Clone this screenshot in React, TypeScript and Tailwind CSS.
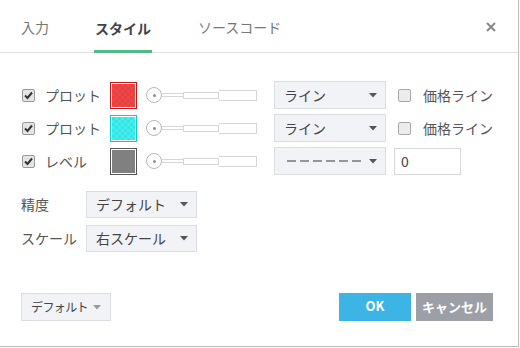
import React from "react";

const font = "font-['Noto_Sans_CJK_JP','Noto_Sans',sans-serif]";

function Check({ checked }: { checked: boolean }) {
  return (
    <div
      className={`w-[13px] h-[13px] rounded-[2px] border flex items-center justify-center ${
        checked ? "border-[#9a9a9a] bg-[#e4e4e4]" : "border-[#a8a8a8] bg-[#ececec]"
      }`}
    >
      {checked && (
        <svg width="9" height="9" viewBox="0 0 9 9">
          <path d="M1 4.5 L3.5 7 L8 1.5" stroke="#333" strokeWidth="2" fill="none" />
        </svg>
      )}
    </div>
  );
}

function Swatch({ color, border, checker }: { color: string; border: string; checker: boolean }) {
  return (
    <div className="w-[27px] h-[27px] border p-[1px] bg-white" style={{ borderColor: border }}>
      <svg width="23" height="23" viewBox="0 0 23 23" className="block">
        <defs>
          <pattern id={`p${color}`} width="6" height="6" patternUnits="userSpaceOnUse">
            <rect width="6" height="6" fill={color} />
            {checker && <rect width="3" height="3" fill="#000" opacity="0.06" />}
            {checker && <rect x="3" y="3" width="3" height="3" fill="#000" opacity="0.06" />}
          </pattern>
        </defs>
        <rect width="23" height="23" fill={`url(#p${color})`} />
      </svg>
    </div>
  );
}

function Slider() {
  return (
    <div className="flex items-center w-[111px]">
      <div className="w-[16px] h-[16px] rounded-full border border-[#b3b7bf] bg-white flex items-center justify-center shrink-0">
        <div className="w-[3px] h-[3px] rounded-full bg-[#8a8e96]" />
      </div>
      <div className="w-[21px] h-[4px] border-y border-[#d4d6da] bg-white" />
      <div className="w-[36px] h-[7px] border border-[#d4d6da] bg-white" />
      <div className="w-[38px] h-[11px] border border-[#d4d6da] border-l-0 bg-white" />
    </div>
  );
}

function Caret({ light }: { light?: boolean }) {
  return (
    <svg width="8" height="5" viewBox="0 0 8 5" className="shrink-0">
      <path d="M0 0 H8 L4 4.5 Z" fill={light ? "#9a9a9a" : "#555"} />
    </svg>
  );
}

function Select({ children, width, height = 28 }: { children: React.ReactNode; width: string; height?: number }) {
  return (
    <div
      className={`${width} ${height === 28 ? "h-[28px]" : "h-[27px]"} flex items-center justify-between pl-[9px] pr-[8px] bg-[#f1f3f6] border border-[#dadde2] text-[14px] text-[#444] whitespace-nowrap`}
    >
      <span>{children}</span>
      <Caret />
    </div>
  );
}

function Row({
  label,
  color,
  border,
  checker,
  last,
}: {
  label: string;
  color: string;
  border: string;
  checker: boolean;
  last?: boolean;
}) {
  return (
    <div className="flex items-center h-[28px] mb-[5px]">
      <div className="w-[24px] pl-[1px]">
        <Check checked />
      </div>
      <div className="w-[65px] text-[14px] text-[#555]">{label}</div>
      <Swatch color={color} border={border} checker={checker} />
      <div className="ml-[9px]">
        <Slider />
      </div>
      <div className="ml-[17px]">
        {last ? (
          <div className="w-[112px] h-[28px] flex items-center justify-between pl-[12px] pr-[8px] bg-[#f1f3f6] border border-[#dadde2]">
            <svg width="74" height="4" viewBox="0 0 74 4">
              <line x1="0" y1="2" x2="74" y2="2" stroke="#777" strokeWidth="1.3" strokeDasharray="9 4" />
            </svg>
            <Caret />
          </div>
        ) : (
          <Select width="w-[112px]">ライン</Select>
        )}
      </div>
      {last ? (
        <div className="ml-[8px] w-[67px] h-[27px] border border-[#d6d8dc] bg-white flex items-center pl-[6px] text-[14px] text-[#444]">
          0
        </div>
      ) : (
        <div className="flex items-center ml-[12px]">
          <Check checked={false} />
          <span className="ml-[12px] text-[14px] text-[#555]">価格ライン</span>
        </div>
      )}
    </div>
  );
}

export default function App() {
  return (
    <div className={`w-[520px] h-[348px] bg-[#fafafa] ${font}`}>
      <div className="w-[519px] h-[347px] bg-white border-r border-b border-[#bdbdbd] flex flex-col">
        <div className="h-[53px] border-b border-[#dfe1e4] flex items-end justify-between pl-[21px] pr-[22px]">
          <div className="flex items-end">
            <div className="h-[50px] flex items-center text-[14px] text-[#777]">入力</div>
            <div className="ml-[45px] h-[50px] flex items-center text-[14px] font-bold text-[#3f434a] border-b-[3px] border-[#53b987] pt-[3px] mb-[-1px] px-[1px]">
              スタイル
            </div>
            <div className="ml-[46px] h-[50px] flex items-center text-[14px] text-[#777]">ソースコード</div>
          </div>
          <div className="h-[50px] flex items-center text-[#8a8a8a]">
            <svg width="10" height="10" viewBox="0 0 10 10">
              <path d="M1 1 L9 9 M9 1 L1 9" stroke="#888" strokeWidth="2" />
            </svg>
          </div>
        </div>

        <div className="pl-[21px] pt-[28px]">
          <Row label="プロット" color="#f24545" border="#c41a1a" checker />
          <Row label="プロット" color="#3ef0f0" border="#14c8cc" checker />
          <Row label="レベル" color="#808080" border="#555" checker={false} last />

          <div className="flex items-center mt-[16px] h-[27px]">
            <div className="w-[65px] text-[14px] text-[#555]">精度</div>
            <Select width="w-[111px]" height={27}>デフォルト</Select>
          </div>
          <div className="flex items-center mt-[7px] h-[27px]">
            <div className="w-[65px] text-[14px] text-[#555]">スケール</div>
            <Select width="w-[111px]" height={27}>右スケール</Select>
          </div>
        </div>

        <div className="mt-auto mb-[25px] px-[21px] flex items-center justify-between">
          <div className="w-[90px] h-[28px] bg-[#f1f3f6] border border-[#dadde2] flex items-center justify-between pl-[9px] pr-[9px] text-[12px] tracking-[-0.6px] text-[#444] whitespace-nowrap">
            <span>デフォルト</span>
            <Caret light />
          </div>
          <div className="flex gap-[5px] mr-[4px]">
            <div className="w-[72px] h-[28px] bg-[#3cb4e5] text-white text-[13px] font-bold flex items-center justify-center pb-[3px]">
              OK
            </div>
            <div className="w-[77px] h-[28px] bg-[#9c9fa6] text-white text-[13px] font-bold flex items-center justify-center">
              キャンセル
            </div>
          </div>
        </div>
      </div>
    </div>
  );
}
